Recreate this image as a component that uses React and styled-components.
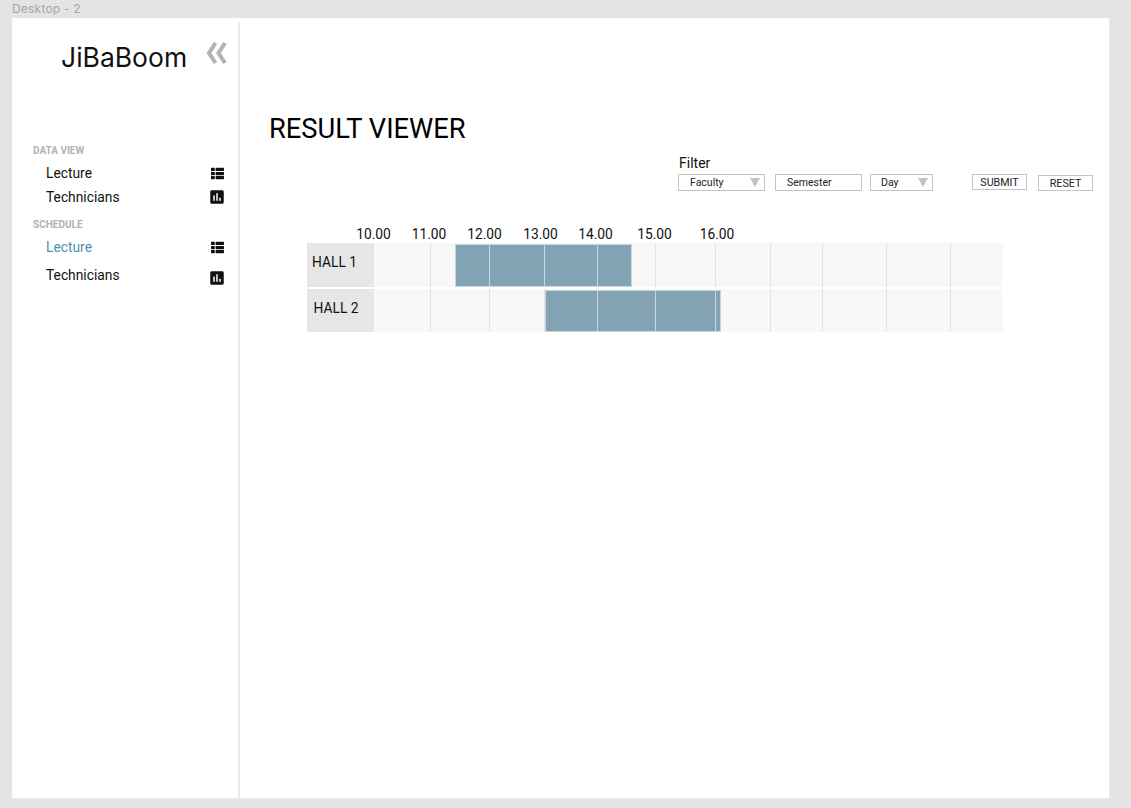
import React from 'react'
import styled, { createGlobalStyle } from 'styled-components'
import { FaThList } from 'react-icons/fa'
import { MdAssessment } from 'react-icons/md'

const GlobalStyle = createGlobalStyle`
  html, body {
    margin: 0;
    height: 808px;
    overflow: hidden;
    background: #e4e4e4;
    font-family: 'Roboto', 'Liberation Sans', sans-serif;
  }
`

const ticks = [
  { label: '10.00', center: 372.5 },
  { label: '11.00', center: 428 },
  { label: '12.00', center: 483.5 },
  { label: '13.00', center: 539.5 },
  { label: '14.00', center: 594.5 },
  { label: '15.00', center: 653.5 },
  { label: '16.00', center: 716 },
]

const gridLines = [430, 489, 544, 597, 655, 715, 770, 822, 886, 950]
const TRACK_START = 374

const halls = [
  { name: 'HALL 1', indent: 5, height: 44, from: 455, to: 631.5 },
  { name: 'HALL 2', indent: 6.5, height: 43, from: 544.5, to: 720.5 },
]

const App = () => {
  return (
    <>
      <GlobalStyle />
      <Page>
        <FrameLabel>Desktop - 2</FrameLabel>
        <Artboard>
          <Sidebar>
            <Brand>
              <Logo>JiBaBoom</Logo>
              <Collapse viewBox='0 0 22 22'>
                <polyline points='10.5,1 4,11 10.5,21' />
                <polyline points='20,1 13.5,11 20,21' />
              </Collapse>
            </Brand>
            <Nav>
              <GroupTitle>DATA VIEW</GroupTitle>
              <NavItem $h={24}>
                Lecture
                <ListIcon />
              </NavItem>
              <NavItem $h={24}>
                Technicians
                <ChartIcon />
              </NavItem>
              <GroupTitle $top={8}>SCHEDULE</GroupTitle>
              <NavItem $h={24} $active>
                Lecture
                <ListIcon />
              </NavItem>
              <NavItem $h={32} $iconDrop={3}>
                Technicians
                <ChartIcon />
              </NavItem>
            </Nav>
          </Sidebar>
          <Main>
            <Title>RESULT VIEWER</Title>
            <FilterBar>
              <FilterLabel>Filter</FilterLabel>
              <Controls>
                <Field $w={87} $pad={11}>
                  Faculty
                  <Caret />
                </Field>
                <Field $w={87} $gap={10} $pad={11}>
                  Semester
                </Field>
                <Field $w={63} $gap={8} $pad={10}>
                  Day
                  <Caret />
                </Field>
                <ActionButton $gap={39}>SUBMIT</ActionButton>
                <ActionButton $gap={11} $top={1}>
                  RESET
                </ActionButton>
              </Controls>
            </FilterBar>
            <Chart>
              <TickRow>
                {ticks.map((tick, i) => {
                  const prev = i === 0 ? tick.center - 17.5 : ticks[i - 1].center + 17.5
                  return (
                    <Tick key={tick.label} style={{ marginLeft: tick.center - 17.5 - prev }}>
                      {tick.label}
                    </Tick>
                  )
                })}
              </TickRow>
              {halls.map((hall) => {
                return (
                  <Row key={hall.name} $h={hall.height}>
                    <HallName $indent={hall.indent}>{hall.name}</HallName>
                    <Track>
                      <Booking
                        style={{
                          left: hall.from - TRACK_START,
                          width: hall.to - hall.from,
                        }}
                      />
                      {gridLines.map((x) => {
                        return <GridLine key={x} style={{ left: x - TRACK_START }} />
                      })}
                    </Track>
                  </Row>
                )
              })}
            </Chart>
          </Main>
        </Artboard>
      </Page>
    </>
  )
}

const Page = styled.div`
  width: 1131px;
  height: 808px;
  padding: 0 22px 10px 12px;
  box-sizing: border-box;
  display: flex;
  flex-direction: column;
`

const FrameLabel = styled.div`
  height: 18px;
  line-height: 17px;
  font-family: 'Inter', sans-serif;
  font-size: 12px;
  letter-spacing: 0.2px;
  color: #a6a6a6;
`

const Artboard = styled.div`
  flex: 1;
  display: flex;
  background: #fff;
  box-shadow: 1px 0 0 #ececec, 0 1px 0 #ececec;
`

const Sidebar = styled.aside`
  width: 228px;
  margin-top: 4px;
  flex-shrink: 0;
  box-sizing: border-box;
  border-right: 2px solid #ebebeb;
`

const Brand = styled.div`
  height: 110px;
  padding: 19px 11px 0 49px;
  box-sizing: border-box;
  display: flex;
  align-items: flex-start;
  justify-content: space-between;
`

const Logo = styled.div`
  font-family: 'Inter', sans-serif;
  font-size: 26.5px;
  line-height: 32px;
  color: #111;
`

const Collapse = styled.svg`
  width: 22px;
  height: 22px;
  margin-top: 1px;
  flex-shrink: 0;
  fill: none;
  stroke: #b3b3b3;
  stroke-width: 4;
`

const Nav = styled.nav`
  padding: 11px 14px 0 21px;
`

const GroupTitle = styled.div`
  margin-top: ${(p) => p.$top || 0}px;
  height: 18px;
  line-height: 16px;
  font-size: 10px;
  font-weight: 700;
  color: #b3b3b3;
`

const NavItem = styled.div`
  height: ${(p) => p.$h}px;
  padding-left: 13px;
  display: flex;
  align-items: center;
  justify-content: space-between;
  font-size: 13.8px;
  color: ${(p) => (p.$active ? '#4a90b0' : '#111')};
  svg {
    flex-shrink: 0;
    margin-top: ${(p) => (p.$iconDrop || 0) * 2}px;
    color: #111;
  }
`

const ListIcon = styled(FaThList)`
  width: 13px;
  height: 13px;
`

const ChartIcon = styled(MdAssessment)`
  width: 18px;
  height: 18px;
  margin-right: -2px;
`

const Main = styled.main`
  flex: 1;
  min-width: 0;
  padding: 93px 0 0 29px;
`

const Title = styled.h1`
  margin: 0;
  height: 36px;
  line-height: 36px;
  font-size: 27.3px;
  font-weight: 400;
  color: #000;
`

const FilterBar = styled.div`
  margin: 7px 0 0 409px;
`

const FilterLabel = styled.div`
  margin-left: 1px;
  height: 20px;
  line-height: 18px;
  font-size: 14px;
  color: #111;
`

const Controls = styled.div`
  display: flex;
  align-items: flex-start;
`

const Field = styled.div`
  width: ${(p) => p.$w}px;
  margin-left: ${(p) => p.$gap || 0}px;
  height: 17px;
  padding-left: ${(p) => p.$pad}px;
  box-sizing: border-box;
  border: 1px solid #c4c4c4;
  display: flex;
  align-items: center;
  justify-content: space-between;
  font-size: 10.5px;
  color: #222;
`

const Caret = styled.span`
  margin-right: 4px;
  width: 0;
  height: 0;
  border-left: 5.5px solid transparent;
  border-right: 5.5px solid transparent;
  border-top: 9px solid #c2c2c2;
`

const ActionButton = styled.div`
  width: 55px;
  height: 16px;
  margin-left: ${(p) => p.$gap}px;
  margin-top: ${(p) => p.$top || 0}px;
  box-sizing: border-box;
  border: 1px solid #c4c4c4;
  display: flex;
  align-items: center;
  justify-content: center;
  font-size: 10.7px;
  color: #222;
`

const Chart = styled.div`
  margin: 32px 0 0 38px;
  width: 696px;
`

const TickRow = styled.div`
  height: 20px;
  box-sizing: border-box;
  padding: 3px 0 0 49px;
  display: flex;
`

const Tick = styled.div`
  width: 35px;
  flex-shrink: 0;
  text-align: center;
  line-height: 17px;
  font-size: 13.8px;
  white-space: nowrap;
  color: #111;
`

const Row = styled.div`
  display: flex;
  height: ${(p) => p.$h}px;
  margin-bottom: 2px;
`

const HallName = styled.div`
  width: 67px;
  padding-left: ${(p) => p.$indent}px;
  padding-bottom: 6px;
  box-sizing: border-box;
  background: #e6e6e6;
  display: flex;
  align-items: center;
  font-size: 13.8px;
  color: #111;
`

const Track = styled.div`
  position: relative;
  flex: 1;
  background: #f8f8f8;
`

const Booking = styled.div`
  position: absolute;
  top: 1px;
  bottom: 0;
  box-sizing: border-box;
  background: #82a3b4;
  border: 1px solid #c8d6dd;
`

const GridLine = styled.div`
  position: absolute;
  top: 0;
  bottom: 0;
  width: 1px;
  background: rgba(222, 222, 222, 0.85);
`

export default App
